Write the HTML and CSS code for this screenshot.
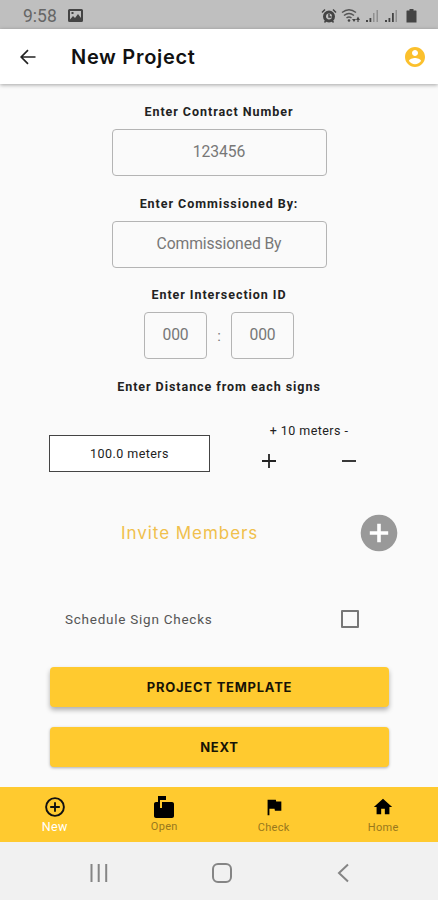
FILE: index.html
```html
<!DOCTYPE html>
<html lang="en">
<head>
  <meta charset="UTF-8">
  <meta name="viewport" content="width=device-width, initial-scale=1">
  <title>New Project</title>
  <link rel="stylesheet" href="styles.css">
</head>
<body>

  <div class="status-bar">
    <span class="time">9:58</span>
    <svg class="status-photo" width="15" height="14" viewBox="0 0 15 14">
      <path fill-rule="evenodd" d="M1.5 0h12A1.5 1.5 0 0 1 15 1.5v10a1.500 1.500 0 0 1-1.500 1.500h-12A1.500 1.500 0 0 1 0 11.500v-10A1.500 1.500 0 0 1 1.500 0zM2 2v8.500l3-3.500 2 2 3-4 3 4V2zM3.500 3h2v2h-2z"/>
    </svg>
    <div class="status-icons">
      <svg width="16" height="16" viewBox="0 0 16 16">
        <circle cx="8" cy="8.500" r="4.500" fill="none" stroke="#444" stroke-width="3"/>
        <path d="M8 6v3h2.500M1 4.500 4 1.500M12 1.500l3 3M3.500 14.500l1.500-2M12.500 14.500l-1.500-2" fill="none" stroke="#444" stroke-width="1.500"/>
      </svg>
      <svg width="20" height="16" viewBox="0 0 20 16">
        <path d="M1 4.500Q8 -1 15 4.500M3 7.500q5-4 10 0M5.500 10q2.500-2 5 0" fill="none" stroke="#555" stroke-width="1.500"/>
        <circle cx="8" cy="12.500" r="1.300"/>
        <path d="M11 11h4l-2 3zM15 12l2-3.500 2 3.500h-1.400v2h-1.200v-2z"/>
      </svg>
      <svg width="15" height="14" viewBox="0 0 15 14">
        <path d="M1 11h2v2H1zM4.500 9h1.800v4H4.500z"/>
        <path fill="#909090" d="M8 4h1.500v9H8zM11.500 1H13v12h-1.500z"/>
      </svg>
      <svg width="15" height="14" viewBox="0 0 15 14">
        <path d="M1 11h2v2H1zM4.500 9h1.800v4H4.500zM8 4h1.800v9H8z"/>
        <path fill="#909090" d="M11.500 1H13v12h-1.500z"/>
      </svg>
      <svg class="battery" width="11" height="14" viewBox="0 0 11 14">
        <path d="M3.500 0h4v1.500H10a.5.5 0 0 1 .5.500v11.500H.5V2a.5.5 0 0 1 .5-.5h2.500z"/>
      </svg>
    </div>
  </div>

  <header class="app-bar">
    <svg width="16" height="16" viewBox="0 0 16 16">
      <path d="M15.500 8H2M8 1.200 1.200 8 8 14.800" fill="none" stroke="#222" stroke-width="1.700"/>
    </svg>
    <h1>New Project</h1>
    <svg class="account" width="20" height="20" viewBox="2 2 20 20">
      <path fill="#fbc02d" d="M12 2C6.480 2 2 6.480 2 12s4.480 10 10 10 10-4.480 10-10S17.520 2 12 2zm0 3c1.660 0 3 1.340 3 3s-1.340 3-3 3-3-1.340-3-3 1.340-3 3-3zm0 14.200c-2.500 0-4.710-1.280-6-3.220.030-1.990 4-3.080 6-3.080 1.990 0 5.970 1.090 6 3.080-1.290 1.940-3.500 3.220-6 3.220z"/>
    </svg>
  </header>

  <main>
    <div class="field">
      <label>Enter Contract Number</label>
      <div class="input">123456</div>
    </div>
    <div class="field">
      <label>Enter Commissioned By:</label>
      <div class="input">Commissioned By</div>
    </div>
    <div class="field">
      <label>Enter Intersection ID</label>
      <div class="id-row">
        <div class="input small">000</div>
        <span>:</span>
        <div class="input small">000</div>
      </div>
    </div>
    <label>Enter Distance from each signs</label>

    <section class="distance">
      <div class="distance-value">100.0 meters</div>
      <div class="stepper">
        <p>+ 10 meters -</p>
        <div class="stepper-buttons">
          <svg width="16" height="16" viewBox="0 0 16 16"><path d="M8 1v14M1 8h14" stroke="#222" stroke-width="1.800"/></svg>
          <svg width="16" height="16" viewBox="0 0 16 16"><path d="M1 8h14" stroke="#222" stroke-width="1.800"/></svg>
        </div>
      </div>
    </section>

    <section class="invite">
      <span>Invite Members</span>
      <svg width="38" height="38" viewBox="0 0 38 38">
        <circle cx="19" cy="19" r="18.300" fill="#999"/>
        <path d="M19 9.800v18.400M9.800 19h18.400" stroke="#fff" stroke-width="3.600"/>
      </svg>
    </section>

    <section class="schedule">
      <span>Schedule Sign Checks</span>
      <div class="checkbox"></div>
    </section>

    <div class="btn">PROJECT TEMPLATE</div>
    <div class="btn next">NEXT</div>
  </main>

  <nav class="tabs">
    <div class="tab active">
      <svg width="22" height="22" viewBox="0 0 22 22">
        <circle cx="11" cy="11" r="8.900" fill="none" stroke="#111" stroke-width="1.900"/>
        <path d="M11 6.200v9.600M6.200 11h9.600" stroke="#111" stroke-width="1.900"/>
      </svg>
      <span>New</span>
    </div>
    <div class="tab open">
      <svg width="24" height="22" viewBox="0 0 24 22">
        <path d="M20 6H10v6H8V4h6V0H6v6H4c-1.100 0-2 .9-2 2v12c0 1.100.9 2 2 2h16c1.100 0 2-.9 2-2V8c0-1.100-.9-2-2-2z"/>
      </svg>
      <span>Open</span>
    </div>
    <div class="tab">
      <svg width="22" height="22" viewBox="0 0 24 24">
        <path d="M14.400 6 14 4H5v17h2v-7h5.600l.4 2h7V6z"/>
      </svg>
      <span>Check</span>
    </div>
    <div class="tab">
      <svg width="22" height="22" viewBox="0 0 24 24">
        <path d="M10 20v-6h4v6h5v-8h3L12 3 2 12h3v8z"/>
      </svg>
      <span>Home</span>
    </div>
  </nav>

  <div class="system-nav">
    <svg width="20" height="20" viewBox="0 0 20 20"><path d="M2.500 1v18M9.700 1v18M17.200 1v18"/></svg>
    <svg width="20" height="20" viewBox="0 0 20 20"><rect x="1" y="1" width="18" height="18" rx="5"/></svg>
    <svg width="20" height="20" viewBox="0 0 20 20"><path d="M14 1.500 5 10l9 8.500"/></svg>
  </div>

</body>
</html>
```
FILE: styles.css
```css
* {
  margin: 0;
  padding: 0;
  box-sizing: border-box;
}

:root {
  --yellow: #ffca2f;
  --bg: #fafafa;
  --border: #b4b4b4;
  --hint: #777;
}

body {
  width: 438px;
  height: 900px;
  display: flex;
  flex-direction: column;
  overflow: hidden;
  background: var(--bg);
  color: #222;
  font-family: Roboto, sans-serif;
}

svg {
  display: block;
  flex: none;
}

/* Status bar */
.status-bar {
  height: 29px;
  display: flex;
  align-items: center;
  padding: 2px 21px 0 23px;
  background: #bfbfbf;
}

.time {
  width: 45px;
  font-size: 17.5px;
  color: #666;
}

.status-bar svg {
  fill: #444;
}

.status-icons {
  margin-left: auto;
  display: flex;
  align-items: center;
  gap: 4px;
}

.battery {
  margin-left: 3px;
}

/* App bar */
.app-bar {
  height: 55px;
  display: flex;
  align-items: center;
  padding: 0 13px 0 20px;
  background: #fff;
  box-shadow: 0 1px 4px rgba(0, 0, 0, 0.35);
}

.app-bar h1 {
  margin-left: 35px;
  font-family: Inter, sans-serif;
  font-size: 20px;
  font-weight: 600;
  letter-spacing: 0.7px;
  color: #111;
}

.account {
  margin-left: auto;
}

/* Form */
main {
  flex: 1;
  padding-top: 20px;
}

label {
  display: block;
  height: 16px;
  line-height: 15px;
  text-align: center;
  font-size: 12.5px;
  font-weight: 700;
  letter-spacing: 0.95px;
}

.field {
  height: 91.5px;
}

.input {
  width: 215px;
  height: 47px;
  margin: 9px auto 0;
  border: 1px solid var(--border);
  border-radius: 4px;
  line-height: 44px;
  text-align: center;
  font-size: 15.7px;
  letter-spacing: -0.1px;
  color: var(--hint);
}

.id-row {
  display: flex;
  justify-content: center;
  align-items: center;
  margin-top: 9px;
}

.input.small {
  width: 63px;
  margin: 0;
}

.id-row span {
  width: 24px;
  text-align: center;
  font-size: 15px;
  color: var(--hint);
}

.distance {
  display: flex;
  align-items: flex-end;
  margin-top: 28px;
  padding-left: 49px;
}

.distance-value {
  width: 161px;
  height: 37px;
  border: 1px solid #444;
  background: #fff;
  line-height: 35px;
  text-align: center;
  font-size: 12.5px;
  letter-spacing: 0.45px;
}

.stepper {
  width: 96px;
  margin-left: 51px;
}

.stepper p {
  margin: 0 -12px 14px;
  line-height: 16px;
  text-align: center;
  font-size: 12.5px;
  letter-spacing: 0.45px;
}

.stepper-buttons {
  display: flex;
  justify-content: space-between;
  margin-bottom: 3px;
}

.invite {
  height: 38px;
  display: flex;
  align-items: center;
  justify-content: space-between;
  margin-top: 42px;
  padding: 0 40px 0 121px;
  font-family: Inter, sans-serif;
  font-size: 17px;
  letter-spacing: 0.95px;
  color: #f0c04c;
}

.schedule {
  display: flex;
  align-items: center;
  justify-content: space-between;
  margin: 58px 79px 0 65px;
  font-size: 13.5px;
  letter-spacing: 0.75px;
  color: #555;
}

.checkbox {
  width: 18px;
  height: 18px;
  border: 2px solid #777;
  border-radius: 1px;
}

.btn {
  width: 339px;
  height: 40px;
  margin: 39px 0 0 50px;
  border-radius: 4px;
  background: var(--yellow);
  box-shadow: 0 3px 5px rgba(0, 0, 0, 0.3);
  line-height: 40px;
  text-align: center;
  font-family: Inter, sans-serif;
  font-size: 13px;
  font-weight: 700;
  letter-spacing: 0.75px;
  color: #171306;
}

.btn.next {
  margin-top: 20px;
  box-shadow: 0 1px 3px rgba(0, 0, 0, 0.3);
}

/* Bottom tabs */
.tabs {
  height: 55px;
  display: grid;
  grid-template-columns: repeat(4, 1fr);
  background: var(--yellow);
}

.tab {
  display: flex;
  flex-direction: column;
  align-items: center;
  padding-top: 9px;
  font-size: 11px;
  letter-spacing: 0.3px;
  color: #98781d;
}

.tab span {
  margin-top: 3px;
  line-height: 13px;
}

.tab.active {
  font-size: 12.5px;
  color: #fff;
}

.tab.active span {
  margin-top: 2px;
}

.tab.open span {
  margin-top: 2px;
}

/* System navigation */
.system-nav {
  height: 58px;
  display: flex;
  justify-content: space-between;
  align-items: center;
  padding: 3px 84px 0 89px;
  background: #f1f1f1;
}

.system-nav svg {
  fill: none;
  stroke: #858585;
  stroke-width: 2;
}
```
